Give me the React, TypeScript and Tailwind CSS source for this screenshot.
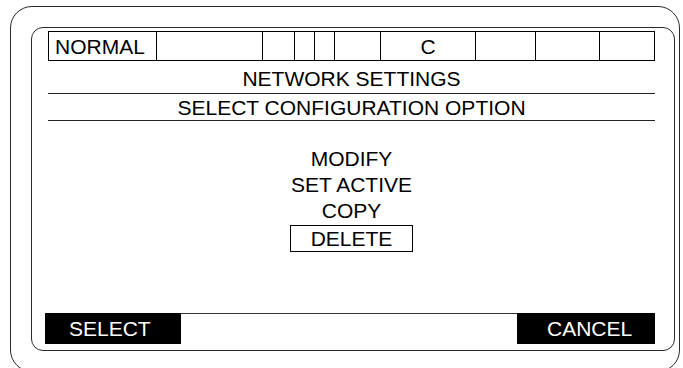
export default function App() {
  const cells = [
    { w: 'w-[108px]', label: 'NORMAL', align: 'justify-start pl-[6px]' },
    { w: 'w-[106px]', label: '' },
    { w: 'w-[32px]', label: '' },
    { w: 'w-[20px]', label: '' },
    { w: 'w-[20px]', label: '' },
    { w: 'w-[46px]', label: '' },
    { w: 'w-[95px]', label: 'C', align: 'justify-center' },
    { w: 'w-[60px]', label: '' },
    { w: 'w-[64px]', label: '' },
    { w: 'w-[55px]', label: '' },
  ]

  const options = ['MODIFY', 'SET ACTIVE', 'COPY']

  return (
    <div
      className="w-[683px] h-[368px] bg-white overflow-hidden text-black text-[21px]"
      style={{ fontFamily: '"Liberation Sans", Arial, sans-serif' }}
    >
      {/* Outer bezel */}
      <div className="ml-[10px] mt-[6px] w-[670px] h-[366px] rounded-[22px] border border-[#2a2a2a] pl-[20px] pt-[20px]">
        {/* Screen */}
        <div className="w-[644px] h-[324px] rounded-[12px] border border-[#2a2a2a] flex flex-col pl-[13px] pr-[19px] pt-[3px]">
          {/* Status row */}
          <div className="ml-[3px] flex h-[30px] border-t border-b border-r border-black">
            {cells.map((c, i) => (
              <div key={i} className={`${c.w} shrink-0 border-l border-black flex items-center ${c.align ?? ''} leading-none`}>
                {c.label}
              </div>
            ))}
          </div>

          {/* Title */}
          <div className="ml-[3px] h-[33px] flex items-center justify-center border-b border-[#222] leading-none pt-[2px]">
            NETWORK SETTINGS
          </div>
          <div className="ml-[3px] h-[27px] flex items-center justify-center border-b border-[#222] leading-none pt-[1px]">
            SELECT CONFIGURATION OPTION
          </div>

          {/* Options */}
          <div className="ml-[3px] mt-[25px] flex flex-col items-center leading-[26px]">
            {options.map((o) => (
              <div key={o}>{o}</div>
            ))}
            <div className="mt-[1px] w-[123px] h-[27px] border border-black flex items-center justify-center leading-none">
              DELETE
            </div>
          </div>

          {/* Softkeys */}
          <div className="mt-auto mb-[6px] flex h-[31px] leading-none">
            <div className="w-[136px] bg-black text-white flex items-center pl-[24px]">SELECT</div>
            <div className="flex-1 border-t border-[#333]" />
            <div className="w-[138px] bg-black text-white flex items-center pl-[30px]">CANCEL</div>
          </div>
        </div>
      </div>
    </div>
  )
}
